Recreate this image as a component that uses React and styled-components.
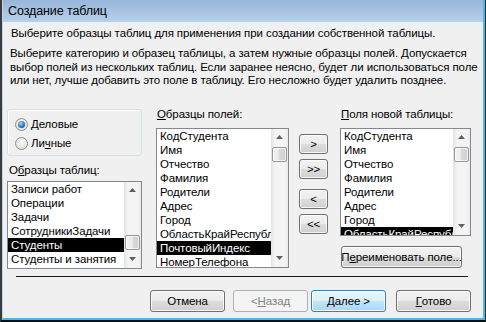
import React from "react";
import styled, { createGlobalStyle, css } from "styled-components";

const GlobalStyle = createGlobalStyle`
  html, body {
    margin: 0;
    padding: 0;
    background: #f0f0f0;
  }
  body {
    font-family: "Liberation Sans", Arial, sans-serif;
    font-size: 11.5px;
    letter-spacing: -0.1px;
    color: #000;
  }
  * {
    box-sizing: border-box;
  }
`;

const Window = styled.div`
  width: 486px;
  height: 322px;
  overflow: hidden;
  border-left: 2px solid #3b3b3b;
  border-right: 1px solid #2c2c2c;
  border-bottom: 2px solid #0c0c0c;
  display: flex;
`;

const Frame = styled.div`
  flex: 1;
  min-width: 0;
  display: flex;
  flex-direction: column;
  border-left: 1px solid #bcd6ef;
  border-right: 2px solid #47bde6;
  border-bottom: 2px solid #3fbbe5;
  box-shadow: inset -1px 0 0 #e8f4fb;
`;

const TitleBar = styled.div`
  height: 22px;
  flex: none;
  background: linear-gradient(#97b6d9, #b8d1ea);
  padding: 0 0 0 5px;
  display: flex;
  align-items: center;
  font-size: 12.5px;
  line-height: 22px;
`;

const Content = styled.div`
  flex: 1;
  min-width: 0;
  background: #f0f0f0;
  padding: 5px 4px 0 4px;
  display: flex;
  flex-direction: column;
`;

const Intro = styled.div`
  line-height: 13px;
  padding-left: 4px;
  white-space: nowrap;
`;

const Description = styled.div`
  margin-top: 7px;
  line-height: 13.5px;
  padding-left: 3px;
  white-space: nowrap;
`;

const Main = styled.div`
  margin-top: 20px;
  display: flex;
  align-items: flex-start;
`;

const Column = styled.div`
  width: ${(p) => p.$width}px;
  margin-left: ${(p) => p.$gap || 0}px;
  flex: none;
  display: flex;
  flex-direction: column;
`;

const GroupBox = styled.div`
  margin-top: 1px;
  height: 47px;
  border: 1px solid #d5dfe5;
  border-radius: 3px;
  box-shadow: inset 1px 1px 0 #fff;
  padding: 8px 0 0 7px;
  display: flex;
  flex-direction: column;
  gap: 6px;
`;

const RadioRow = styled.label`
  display: flex;
  align-items: center;
  gap: 3px;
  line-height: 13px;
  height: 13px;
`;

const Radio = styled.span`
  width: 13px;
  height: 13px;
  border-radius: 50%;
  border: 1px solid #8e8f8f;
  background: radial-gradient(circle at 50% 40%, #fafafa, #d8d8d8);
  display: flex;
  align-items: center;
  justify-content: center;
  ${(p) =>
    p.$checked &&
    css`
      &::after {
        content: "";
        width: 7px;
        height: 7px;
        border-radius: 50%;
        background: radial-gradient(circle at 40% 35%, #9fdcff, #1f6fb8 60%, #0c3f7c);
      }
    `}
`;

const FieldLabel = styled.div`
  line-height: 13px;
  padding-left: ${(p) => p.$indent || 1}px;
  margin-top: ${(p) => p.$top || 0}px;
  white-space: nowrap;
`;

const ListBox = styled.div`
  height: ${(p) => p.$height}px;
  margin-top: ${(p) => p.$top}px;
  border: 1px solid #828790;
  background: #fff;
  display: flex;
  overflow: hidden;
`;

const Items = styled.div`
  flex: 1;
  min-width: 0;
  overflow: hidden;
`;

const Item = styled.div`
  height: 14px;
  line-height: 14px;
  padding-left: 3px;
  white-space: nowrap;
  overflow: hidden;
  ${(p) =>
    p.$selected &&
    css`
      background: #000;
      color: #fff;
    `}
`;

const ScrollBar = styled.div`
  width: 17px;
  flex: none;
  display: flex;
  flex-direction: column;
  background: linear-gradient(to right, #e3e3e3, #f4f4f4 25%, #f4f4f4 80%, #ebebeb);
`;

const ScrollArrow = styled.div`
  height: 17px;
  flex: none;
  display: flex;
  align-items: center;
  justify-content: center;
`;

const Track = styled.div`
  flex: 1;
  display: flex;
  flex-direction: column;
  justify-content: ${(p) => (p.$end ? "flex-end" : "flex-start")};
  padding: ${(p) => (p.$end ? "0 0 1px 0" : "1px 0 0 0")};
`;

const Thumb = styled.div`
  height: 15px;
  margin: 0 1px;
  border: 1px solid #979797;
  border-radius: 2px;
  background: linear-gradient(to right, #f4f4f4, #e8e8e8 50%, #d9d9d9 50%, #cfcfcf);
  box-shadow: inset 0 0 0 1px rgba(255, 255, 255, 0.7);
`;

const ButtonStack = styled.div`
  width: 29px;
  margin-left: 10px;
  padding-top: 26px;
  flex: none;
  display: flex;
  flex-direction: column;
`;

const buttonLook = css`
  border: 1px solid #707070;
  border-radius: 3px;
  background: linear-gradient(#f2f2f2 0%, #ebebeb 50%, #dddddd 50%, #cfcfcf 100%);
  box-shadow: inset 0 0 0 1px rgba(255, 255, 255, 0.8);
  font: inherit;
  letter-spacing: inherit;
  color: #000;
  padding: 0;
  display: flex;
  align-items: center;
  justify-content: center;
  white-space: nowrap;
`;

const MoveButton = styled.button`
  ${buttonLook}
  height: 20px;
  margin-top: ${(p) => p.$top || 0}px;
  line-height: 18px;
`;

const RenameButton = styled.button`
  ${buttonLook}
  height: 22px;
  width: 121px;
  margin: 10px 0 0 1px;
`;

const Separator = styled.div`
  height: 1px;
  background: #1a1a1a;
  margin: 7px 11px 0 9px;
`;

const Footer = styled.div`
  margin-top: 13px;
  padding-right: 8px;
  display: flex;
  justify-content: flex-end;
`;

const Button = styled.button`
  ${buttonLook}
  width: 75px;
  height: 22px;
  margin-left: ${(p) => p.$gap || 0}px;
  ${(p) =>
    p.$default &&
    css`
      border-color: #3c7fb1;
      background: linear-gradient(#eaf6fd 0%, #d9f0fc 50%, #bee6fd 50%, #a7d9f5 100%);
    `}
  ${(p) =>
    p.$disabled &&
    css`
      border-color: #adb2b5;
      background: #f4f4f4;
      box-shadow: none;
      color: #838383;
    `}
`;

function Arrow({ down }) {
  return (
    <svg width="7" height="4" viewBox="0 0 7 4">
      <polygon
        points={down ? "0,0 7,0 3.5,4" : "0,4 7,4 3.5,0"}
        fill="#606060"
      />
    </svg>
  );
}

function List({ items, selected, height, top, thumbEnd }) {
  return (
    <ListBox $height={height} $top={top}>
      <Items>
        {items.map((it) => (
          <Item key={it} $selected={it === selected}>
            {it}
          </Item>
        ))}
      </Items>
      <ScrollBar>
        <ScrollArrow>
          <Arrow />
        </ScrollArrow>
        <Track $end={thumbEnd}>
          <Thumb />
        </Track>
        <ScrollArrow>
          <Arrow down />
        </ScrollArrow>
      </ScrollBar>
    </ListBox>
  );
}

const tables = [
  "Записи работ",
  "Операции",
  "Задачи",
  "СотрудникиЗадачи",
  "Студенты",
  "Студенты и занятия",
];

const fields = [
  "КодСтудента",
  "Имя",
  "Отчество",
  "Фамилия",
  "Родители",
  "Адрес",
  "Город",
  "ОбластьКрайРеспублика",
  "ПочтовыйИндекс",
  "НомерТелефона",
];

export default function App() {
  return (
    <>
      <GlobalStyle />
      <Window>
        <Frame>
          <TitleBar>Создание таблиц</TitleBar>
          <Content>
            <Intro>
              Выберите образцы таблиц для применения при создании собственной таблицы.
            </Intro>
            <Description>
              Выберите категорию и образец таблицы, а затем нужные образцы полей. Допускается
              <br />
              выбор полей из нескольких таблиц. Если заранее неясно, будет ли использоваться поле
              <br />
              или нет, лучше добавить это поле в таблицу. Его несложно будет удалить позднее.
            </Description>
            <Main>
              <Column $width={135}>
                <GroupBox>
                  <RadioRow>
                    <Radio $checked />
                    <span>
                      <u>Д</u>еловые
                    </span>
                  </RadioRow>
                  <RadioRow>
                    <Radio />
                    <span>
                      Ли<u>ч</u>ные
                    </span>
                  </RadioRow>
                </GroupBox>
                <FieldLabel $top={8} $indent={2}>
                  О<u>б</u>разцы таблиц:
                </FieldLabel>
                <List items={tables} selected="Студенты" height={88} top={4} thumbEnd />
              </Column>
              <Column $width={133} $gap={14}>
                <FieldLabel>
                  <u>О</u>бразцы полей:
                </FieldLabel>
                <List items={fields} selected="ПочтовыйИндекс" height={140} top={7} />
              </Column>
              <ButtonStack>
                <MoveButton>&gt;</MoveButton>
                <MoveButton $top={5}>&gt;&gt;</MoveButton>
                <MoveButton $top={10}>&lt;</MoveButton>
                <MoveButton $top={5}>&lt;&lt;</MoveButton>
              </ButtonStack>
              <Column $width={131} $gap={12}>
                <FieldLabel>
                  <u>П</u>оля новой таблицы:
                </FieldLabel>
                <List
                  items={fields.slice(0, 8)}
                  selected="ОбластьКрайРеспублика"
                  height={108}
                  top={7}
                />
                <RenameButton>
                  П<u>е</u>реименовать поле...
                </RenameButton>
              </Column>
            </Main>
            <Separator />
            <Footer>
              <Button>Отмена</Button>
              <Button $gap={8} $disabled>
                &lt; <u>Н</u>азад
              </Button>
              <Button $gap={3} $default>
                <u>Д</u>алее &gt;
              </Button>
              <Button $gap={10}>
                <u>Г</u>отово
              </Button>
            </Footer>
          </Content>
        </Frame>
      </Window>
    </>
  );
}
